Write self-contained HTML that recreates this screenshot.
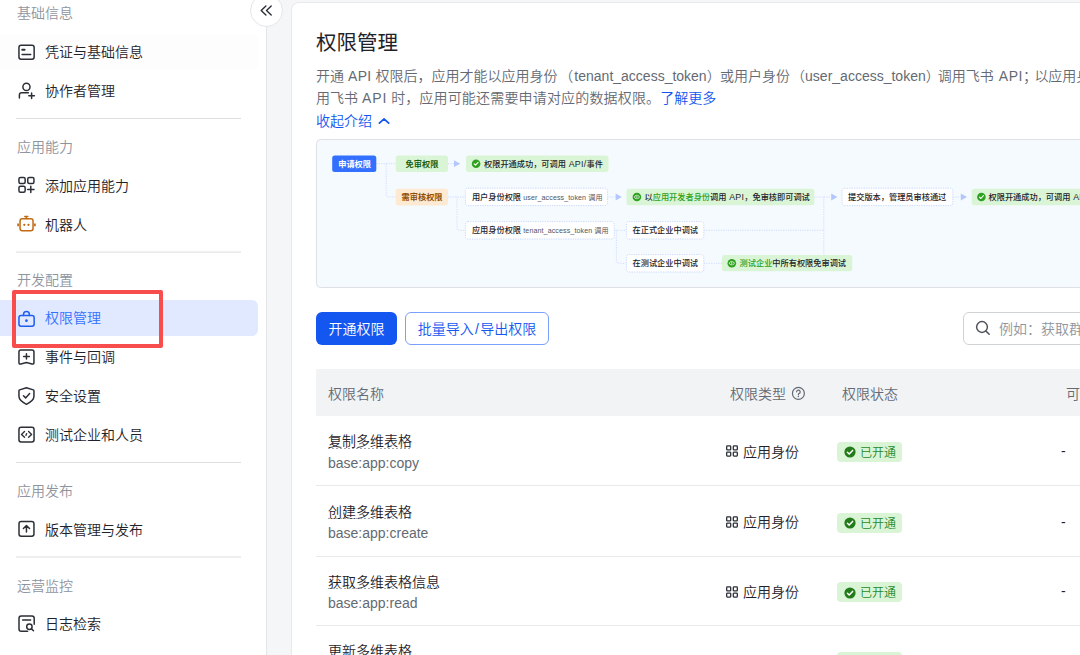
<!DOCTYPE html>
<html lang="zh-CN">
<head>
<meta charset="utf-8">
<title>权限管理</title>
<style>
*{box-sizing:border-box;margin:0;padding:0}
html,body{width:1080px;height:655px;overflow:hidden;background:#f5f6f7}
body{font-family:"Liberation Sans","Noto Sans CJK SC",sans-serif;font-size:14px;font-weight:350;color:#1f2329;position:relative}
/* sidebar */
.side{position:absolute;left:0;top:0;width:267px;height:655px;background:#fff;border-right:1px solid #e4e5e7}
.side .h{position:absolute;left:17px;height:22px;line-height:22px;font-size:14px;color:#8f959e;white-space:nowrap}
.side .it{position:absolute;left:0;width:258px;height:36px;border-radius:0 6px 6px 0;line-height:36px;padding-left:45px;font-size:14px;color:#1f2329;white-space:nowrap}
.side .it svg{position:absolute;left:16px;top:8px;width:20px;height:20px;overflow:visible}
.side .it.hov{background:#fdfdfe}
.side .it.act{background:#e0e9ff;color:#3370ff}
.side .dv{position:absolute;left:16px;width:225px;height:1px;background:#dcddde}
.redbox{position:absolute;left:12px;top:290px;width:151px;height:58px;border:4px solid #f74d4d;border-radius:2px}
.collapse{position:absolute;left:250px;top:-6px;width:33px;height:33px;border-radius:50%;background:#fff;border:1px solid #e4e5e7}
.collapse svg{position:absolute;left:0;top:0;width:31px;height:31px}
/* main */
.card{position:absolute;left:291px;top:2px;width:900px;height:700px;background:#fff;border:1px solid #e8e9eb;border-radius:8px}
h1{position:absolute;left:316px;top:29.1px;font-size:20.5px;line-height:28px;font-weight:400;color:#1f2329;white-space:nowrap}
.desc{position:absolute;left:316px;white-space:nowrap;font-size:14px;line-height:22px;color:#646a73}
.desc a,.lnk{color:#1456f0;text-decoration:none}
.flow{position:absolute;left:316px;top:139px}
.btn1{position:absolute;left:316px;top:312px;width:81px;height:33px;border-radius:6px;background:#1456f0;color:#fff;text-align:center;line-height:35px;font-size:14px}
.btn2{position:absolute;left:405px;top:312px;width:144px;height:33px;border-radius:6px;background:#fff;border:1px solid #7aa0fb;color:#1456f0;text-align:center;line-height:33px;font-size:14px}
.search{position:absolute;left:963px;top:312px;width:200px;height:33px;border-radius:6px;background:#fff;border:1px solid #d0d3d6;line-height:33px;padding-left:35px;color:#8f959e;white-space:nowrap}
.search svg{position:absolute;left:11px;top:7px;width:16px;height:16px;overflow:visible}
.th{position:absolute;left:316px;top:369px;width:800px;height:47px;background:#f2f3f5}
.thc{position:absolute;top:382.6px;line-height:22px;color:#646a73;white-space:nowrap}
.row{position:absolute;left:316px;width:800px;height:70px;border-bottom:1px solid #e8e9eb}
.row .t{position:absolute;left:12px;top:14.3px;line-height:22px;height:22px;color:#1f2329;white-space:nowrap}
.row .t:after{content:"";position:absolute;left:0;right:0;top:17.3px;height:1px;background:repeating-linear-gradient(90deg,#a4a8ae 0 2px,transparent 2px 4px)}
.row .s{position:absolute;left:12px;top:35.7px;line-height:22px;color:#646a73;white-space:nowrap}
.row .ty{position:absolute;left:427px;top:24.6px;line-height:22px;white-space:nowrap}
.row .gi{position:absolute;left:410.4px;top:29.2px;width:12px;height:12px;overflow:visible}
.row .tag{position:absolute;left:521px;top:26px;width:65px;height:20px;border-radius:4px;background:#d9f5d6;color:#27882a;font-size:12px;line-height:23px;padding-left:23px;white-space:nowrap}
.row .tag svg{position:absolute;left:6.5px;top:4.3px;width:12px;height:12px}
.row .da{position:absolute;left:745px;top:24px;line-height:22px}
</style>
</head>
<body>
<div class="side">
  <div class="h" style="top:2px">基础信息</div>
  <div class="it hov" style="top:34px">凭证与基础信息</div>
  <div class="it" style="top:73px">协作者管理</div>
  <div class="dv" style="top:118px"></div>
  <div class="h" style="top:136px">应用能力</div>
  <div class="it" style="top:168px">添加应用能力</div>
  <div class="it" style="top:207px">机器人</div>
  <div class="dv" style="top:251px;transform:translateY(.6px)"></div>
  <div class="h" style="top:269px">开发配置</div>
  <div class="it act" style="top:300px">权限管理</div>
  <div class="it" style="top:339px">事件与回调</div>
  <div class="it" style="top:378px">安全设置</div>
  <div class="it" style="top:417px">测试企业和人员</div>
  <div class="dv" style="top:462px"></div>
  <div class="h" style="top:480px">应用发布</div>
  <div class="it" style="top:512px">版本管理与发布</div>
  <div class="dv" style="top:556px;transform:translateY(.5px)"></div>
  <div class="h" style="top:575px">运营监控</div>
  <div class="it" style="top:606px">日志检索</div>
</div>
<svg class="ico" width="60" height="655" viewBox="0 0 60 655" style="position:absolute;left:0;top:0" fill="none" stroke="#2b2f36" stroke-width="1.5" stroke-linecap="round" stroke-linejoin="round">
<!-- credentials -->
<rect x="18.95" y="45.35" width="15.2" height="13.9" rx="2.2"/>
<path d="M22.2 49.8H24.6" stroke-width="1.9"/><path d="M22.1 54.4H30.7"/>
<!-- collaborators -->
<circle cx="26.45" cy="86.9" r="3.55"/>
<path d="M19.4 98.1V95Q19.4 92.8 21.6 92.8H28.4"/>
<path d="M28.8 95.7H34.4M31.6 92.9V98.5"/>
<!-- add ability -->
<rect x="18.95" y="177.6" width="6.2" height="5.9" rx="1.5"/>
<rect x="27.75" y="177.6" width="6.2" height="5.9" rx="1.5"/>
<rect x="18.95" y="186.35" width="6.2" height="5.9" rx="1.5"/>
<path d="M27.6 189.4H34M30.8 186.2V192.6"/>
<!-- robot -->
<g stroke="#c06a15">
<rect x="20.05" y="218.8" width="13" height="11.9" rx="2.2"/>
<path d="M26.3 218.6V216.6M24.8 216.5H27.8" stroke-width="1.5"/>
<path d="M18.1 223.5V226.2M34.9 223.5V226.2" stroke-width="1.7" stroke-linecap="butt"/>
<circle cx="24.3" cy="224.8" r="1.15" fill="#c06a15" stroke="none"/>
<circle cx="28.5" cy="224.8" r="1.15" fill="#c06a15" stroke="none"/>
</g>
<!-- permission -->
<g stroke="#1f5cf0">
<rect x="18.95" y="315.55" width="15.2" height="10.6" rx="2.2"/>
<path d="M23.55 315.4V314.3A2.9 2.9 0 0 1 29.35 314.3V315.4"/>
<circle cx="26.45" cy="320.7" r="1.35" fill="#1f5cf0" stroke="none"/>
</g>
<!-- events -->
<path d="M20.9 350H32Q33.95 350 33.95 352V362.4Q33.95 364.5 32 363.9L26.45 362.5L20.9 363.9Q18.95 364.5 18.95 362.4V352Q18.95 350 20.9 350Z"/>
<path d="M23.6 356.4H29.3M26.45 353.7V359.1"/>
<!-- security -->
<path d="M26.45 387.7L33.3 389.9Q33.95 390.1 33.95 390.9V396.3Q33.95 400.6 26.45 404.3Q18.95 400.6 18.95 396.3V390.9Q18.95 390.1 19.6 389.9Z"/>
<path d="M23.5 395.8L25.6 397.9L29.6 393.6"/>
<!-- test -->
<rect x="18.95" y="427.25" width="15.1" height="14.8" rx="2.2"/>
<path d="M24.5 431.6L21.5 434.4L24.5 437.2M28.6 431.6L31.6 434.4L28.6 437.2" stroke-width="1.4"/>
<path d="M26.6 433.6L26 435.4" stroke-width="1.4"/>
<!-- publish -->
<rect x="19" y="521.45" width="14.95" height="14.8" rx="2.2"/>
<path d="M26.45 525.6V532M23.4 528.5L26.45 525.5L29.5 528.5"/>
<!-- log -->
<path d="M27.6 631.15H21.2Q19 631.15 19 628.9V618.3Q19 616.05 21.2 616.05H32Q34.2 616.05 34.2 618.3V624.3"/>
<path d="M22.6 620H30.6"/>
<circle cx="29.4" cy="626.8" r="2.7"/>
<path d="M31.5 628.9L33.5 630.8"/>
</svg>
<div class="redbox"></div>
<div class="collapse"><svg viewBox="250.5 -6 33 33" fill="none" stroke="#2b2f36" stroke-width="1.4" stroke-linecap="round" stroke-linejoin="round" style="left:-1px;top:-1px;width:33px;height:33px"><path d="M266.4 5.9L261.7 10.5L266.4 15.1M271.7 5.9L267 10.5L271.7 15.1"/></svg></div>
<div class="card"></div>
<h1>权限管理</h1>
<div class="desc" style="top:65px">开通 <span style="letter-spacing:.4px">API</span> 权限后，应用才能以应用身份<span style="margin-left:1.8px">（</span><span style="margin-left:1px">tenant_access_token</span><span style="margin-right:-.6px">）</span>或用户身份<span style="margin-left:1px">（</span>user_access_token<span style="margin-right:-2px">）</span>调用飞书 <span style="letter-spacing:.5px;margin-left:1.2px">API</span><span style="margin-right:-2.5px">；</span>以应用身份调</div>
<div class="desc" style="top:87px">用飞书 <span style="letter-spacing:1px">API</span> 时，<span style="letter-spacing:.17px">应用可能还需要申请对应的数据权限。</span><a>了解更多</a></div>
<div class="desc lnk" style="top:110px">收起介绍</div>
<svg class="flow" width="764" height="150" viewBox="316 139 764 150">
<rect x="316.5" y="139.5" width="900" height="148" rx="4" fill="#f5faff" stroke="#dee0e3" stroke-width="1"/>
<g fill="none" stroke="#c9d7fd" stroke-width="0.9" stroke-dasharray="1.1 1.3">
<path d="M376.5 163.7H396"/>
<path d="M386.2 163.7V194.5Q386.2 197 388.7 197H396"/>
<path d="M448 163.7H454"/>
<path d="M448 197H465"/>
<path d="M457 197V227.8Q457 230.3 459.5 230.3H465"/>
<path d="M607.6 197H615.5"/>
<path d="M614.4 230.3H626"/>
<path d="M616.4 230.3V260.8Q616.4 263.3 618.9 263.3H626"/>
<path d="M704 230.3H823.8"/>
<path d="M704 263.3H722"/>
<path d="M814.3 197H831"/>
<path d="M823.8 197V255"/>
<path d="M953 197H960.8"/>
</g>
<rect x="332.2" y="155.4" width="44.1" height="16.6" rx="2.5" fill="#3370ff"/>
<rect x="395.7" y="155.4" width="52.3" height="16.6" rx="2.5" fill="#d9f5d6"/>
<path d="M454 160.29999999999998L460.2 163.7L454 167.1Z" fill="#b3c7fd"/>
<rect x="466" y="155.4" width="142.5" height="16.6" rx="2.5" fill="#d9f5d6"/>
<rect x="395.7" y="188.7" width="52.3" height="16.7" rx="2.5" fill="#feead2"/>
<rect x="465.4" y="188.2" width="142.0" height="17.4" rx="2.5" fill="#ffffff" stroke="#bacefd" stroke-width="0.8" stroke-dasharray="1.2 1.2"/>
<path d="M615.6 193.6L621.8000000000001 197L615.6 200.4Z" fill="#b3c7fd"/>
<rect x="626.5" y="188.8" width="187.8" height="16.4" rx="2.5" fill="#d9f5d6"/>
<path d="M831.2 193.6L837.4000000000001 197L831.2 200.4Z" fill="#b3c7fd"/>
<rect x="842" y="188.2" width="110.8" height="17.4" rx="2.5" fill="#ffffff" stroke="#bacefd" stroke-width="0.8" stroke-dasharray="1.2 1.2"/>
<path d="M960.8 193.6L967.0 197L960.8 200.4Z" fill="#b3c7fd"/>
<rect x="971.7" y="188.8" width="228.3" height="16.4" rx="2.5" fill="#d9f5d6"/>
<rect x="465.4" y="221.6" width="148.8" height="17.4" rx="2.5" fill="#ffffff" stroke="#bacefd" stroke-width="0.8" stroke-dasharray="1.2 1.2"/>
<rect x="626.4" y="221.6" width="77.4" height="17.4" rx="2.5" fill="#ffffff" stroke="#bacefd" stroke-width="0.8" stroke-dasharray="1.2 1.2"/>
<rect x="626.4" y="254.6" width="77.4" height="17.4" rx="2.5" fill="#ffffff" stroke="#bacefd" stroke-width="0.8" stroke-dasharray="1.2 1.2"/>
<rect x="722" y="255" width="130.3" height="16.2" rx="2.5" fill="#d9f5d6"/>
<circle cx="476.1" cy="163.7" r="4.3" fill="#2ea121"/><path d="M474.1 163.79999999999998L475.5 165.2L478.1 162.39999999999998" fill="none" stroke="#fff" stroke-width="1.1" stroke-linecap="round" stroke-linejoin="round"/>
<circle cx="636.9" cy="197" r="4.3" fill="#2ea121"/><path d="M635.6999999999999 195.4L634.3 197L635.6999999999999 198.6M638.1 195.4L639.5 197L638.1 198.6M636.9 195.2V198.8" fill="none" stroke="#fff" stroke-width="0.8" stroke-linecap="round" stroke-linejoin="round"/>
<circle cx="981.4" cy="197" r="4.3" fill="#2ea121"/><path d="M979.4 197.1L980.8 198.5L983.4 195.7" fill="none" stroke="#fff" stroke-width="1.1" stroke-linecap="round" stroke-linejoin="round"/>
<circle cx="731.8" cy="263.2" r="4.3" fill="#2ea121"/><path d="M730.5999999999999 261.59999999999997L729.1999999999999 263.2L730.5999999999999 264.8M733.0 261.59999999999997L734.4 263.2L733.0 264.8M731.8 261.4V265.0" fill="none" stroke="#fff" stroke-width="0.8" stroke-linecap="round" stroke-linejoin="round"/>
<g font-family="&quot;Liberation Sans&quot;,&quot;Noto Sans CJK SC&quot;,sans-serif" font-size="8.2" font-weight="500" fill="#1f2329">
<text x="338.2" y="166.6" fill="#ffffff" font-weight="700">申请权限</text>
<text x="405.6" y="166.6" fill="#186010" font-weight="700">免审权限</text>
<text x="484" y="166.6">权限开通成功，可调用 <tspan font-size="8.8" letter-spacing="0.3" dx="0.5">API/</tspan>事件</text>
<text x="401.6" y="199.9" fill="#8f4f04" font-weight="700">需审核权限</text>
<text x="471.9" y="199.9">用户身份权限 <tspan font-size="7.1" font-weight="400" letter-spacing="0.1" fill="#51565d">user_access_token 调用</tspan></text>
<text x="644.5" y="199.9">以<tspan fill="#2ea121">应用开发者身份</tspan>调用 <tspan font-size="8.8" letter-spacing="0.3" dx="0.5">API</tspan>，免审核即可调试</text>
<text x="848" y="199.9">提交版本，管理员审核通过</text>
<text x="988.5" y="199.9">权限开通成功，可调用 <tspan font-size="8.8" letter-spacing="0.3" dx="0.5">API/</tspan>事件</text>
<text x="471.9" y="233.2">应用身份权限 <tspan font-size="7.1" font-weight="400" letter-spacing="0.1" fill="#51565d">tenant_access_token 调用</tspan></text>
<text x="632.5" y="233.2">在正式企业中调试</text>
<text x="632.5" y="266.2">在测试企业中调试</text>
<text x="739.6" y="266.2"><tspan fill="#2ea121">测试企业</tspan>中所有权限免审调试</text>
</g></svg>
<svg style="position:absolute;left:377px;top:115px;width:14px;height:12px" viewBox="377 115 14 12" fill="none" stroke="#1456f0" stroke-width="1.7" stroke-linecap="round" stroke-linejoin="round"><path d="M379.4 123.2L384.05 118.8L388.7 123.2"/></svg>
<div class="btn1">开通权限</div>
<div class="btn2">批量导入<span style="margin:0 1.3px">/</span>导出权限</div>
<div class="search"><svg viewBox="0 0 16 16" fill="none" stroke="#50555d" stroke-width="1.5" stroke-linecap="round"><circle cx="7" cy="7" r="5.4"/><path d="M11 11.1L14.2 14.3"/></svg>例如：获取群组信息</div>
<div class="th"></div>
<div class="thc" style="left:328px">权限名称</div>
<div class="thc" style="left:730px">权限类型</div>
<svg style="position:absolute;left:791px;top:386px;width:15px;height:15px" viewBox="791 386 15 15" fill="none" stroke="#646a73" stroke-width="1.2" stroke-linecap="round" stroke-linejoin="round"><circle cx="798.4" cy="393.4" r="5.95"/><path d="M796.6 391.8A1.8 1.8 0 1 1 798.9 393.6Q798.4 393.8 798.4 394.5V394.8"/><circle cx="798.4" cy="396.4" r="0.75" fill="#646a73" stroke="none"/></svg>
<div class="thc" style="left:842px">权限状态</div>
<div class="thc" style="left:1066px">可选择的数据范围</div>
<div class="row" style="top:416px"><div class="t">复制多维表格</div><div class="s">base:app:copy</div><svg class="gi" viewBox="0 0 12.5 12" fill="none" stroke="#2b2f36" stroke-width="1.35"><rect x="0.7" y="0.7" width="4.2" height="4.2" rx="0.75"/><rect x="7.6" y="0.7" width="4.2" height="4.2" rx="0.75"/><rect x="0.7" y="7.1" width="4.2" height="4.2" rx="0.75"/><rect x="7.6" y="7.1" width="4.2" height="4.2" rx="0.75"/></svg><div class="ty">应用身份</div><div class="tag"><svg viewBox="0 0 12 12"><circle cx="6" cy="6" r="5.6" fill="#237b19"/><path d="M3.4 6.2L5.2 8L8.6 4.4" fill="none" stroke="#fff" stroke-width="1.5" stroke-linecap="round" stroke-linejoin="round"/></svg>已开通</div><div class="da">-</div></div>
<div class="row" style="top:486.6px"><div class="t">创建多维表格</div><div class="s">base:app:create</div><svg class="gi" viewBox="0 0 12.5 12" fill="none" stroke="#2b2f36" stroke-width="1.35"><rect x="0.7" y="0.7" width="4.2" height="4.2" rx="0.75"/><rect x="7.6" y="0.7" width="4.2" height="4.2" rx="0.75"/><rect x="0.7" y="7.1" width="4.2" height="4.2" rx="0.75"/><rect x="7.6" y="7.1" width="4.2" height="4.2" rx="0.75"/></svg><div class="ty">应用身份</div><div class="tag"><svg viewBox="0 0 12 12"><circle cx="6" cy="6" r="5.6" fill="#237b19"/><path d="M3.4 6.2L5.2 8L8.6 4.4" fill="none" stroke="#fff" stroke-width="1.5" stroke-linecap="round" stroke-linejoin="round"/></svg>已开通</div><div class="da">-</div></div>
<div class="row" style="top:556.4px"><div class="t">获取多维表格信息</div><div class="s">base:app:read</div><svg class="gi" viewBox="0 0 12.5 12" fill="none" stroke="#2b2f36" stroke-width="1.35"><rect x="0.7" y="0.7" width="4.2" height="4.2" rx="0.75"/><rect x="7.6" y="0.7" width="4.2" height="4.2" rx="0.75"/><rect x="0.7" y="7.1" width="4.2" height="4.2" rx="0.75"/><rect x="7.6" y="7.1" width="4.2" height="4.2" rx="0.75"/></svg><div class="ty">应用身份</div><div class="tag"><svg viewBox="0 0 12 12"><circle cx="6" cy="6" r="5.6" fill="#237b19"/><path d="M3.4 6.2L5.2 8L8.6 4.4" fill="none" stroke="#fff" stroke-width="1.5" stroke-linecap="round" stroke-linejoin="round"/></svg>已开通</div><div class="da">-</div></div>
<div class="row" style="top:626px"><div class="t">更新多维表格</div><div class="s">base:app:update</div><svg class="gi" viewBox="0 0 12.5 12" fill="none" stroke="#2b2f36" stroke-width="1.35"><rect x="0.7" y="0.7" width="4.2" height="4.2" rx="0.75"/><rect x="7.6" y="0.7" width="4.2" height="4.2" rx="0.75"/><rect x="0.7" y="7.1" width="4.2" height="4.2" rx="0.75"/><rect x="7.6" y="7.1" width="4.2" height="4.2" rx="0.75"/></svg><div class="ty">应用身份</div><div class="tag"><svg viewBox="0 0 12 12"><circle cx="6" cy="6" r="5.6" fill="#237b19"/><path d="M3.4 6.2L5.2 8L8.6 4.4" fill="none" stroke="#fff" stroke-width="1.5" stroke-linecap="round" stroke-linejoin="round"/></svg>已开通</div><div class="da">-</div></div>
</body>
</html>
